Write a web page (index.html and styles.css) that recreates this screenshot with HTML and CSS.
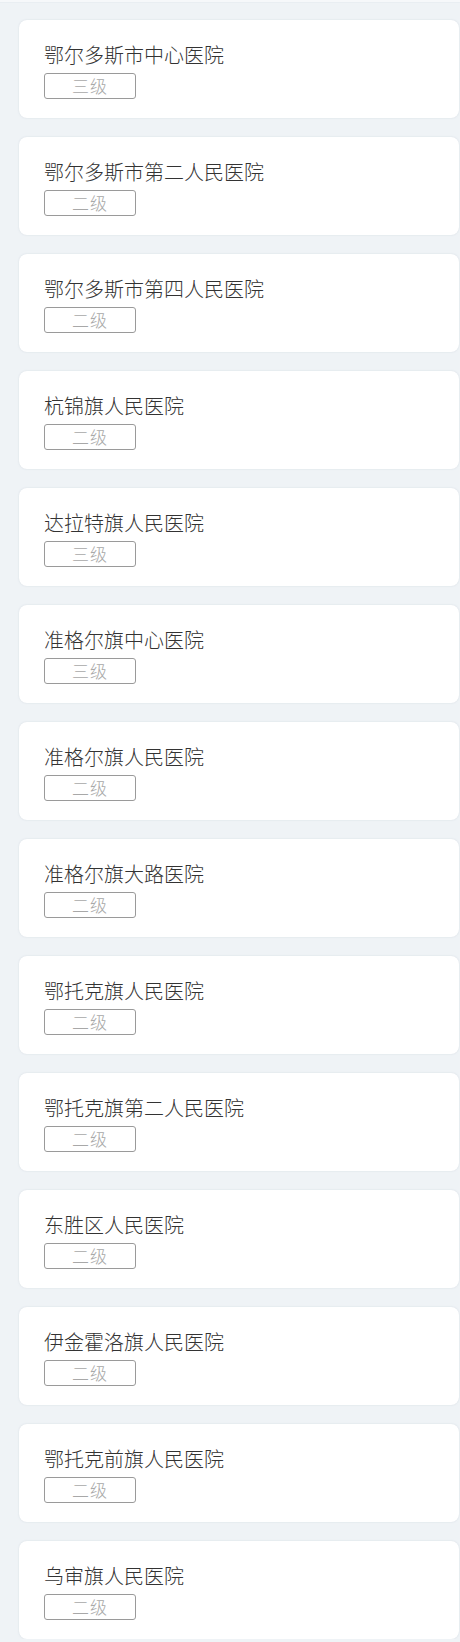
FILE: index.html
```html
<!DOCTYPE html>
<html lang="zh-CN">
<head>
<meta charset="utf-8">
<title>医院列表</title>
<link rel="stylesheet" href="styles.css">
</head>
<body>
<div class="topline"></div>
<ul class="list">
  <li class="card"><div class="name">鄂尔多斯市中心医院</div><span class="level">三级</span></li>
  <li class="card"><div class="name">鄂尔多斯市第二人民医院</div><span class="level">二级</span></li>
  <li class="card"><div class="name">鄂尔多斯市第四人民医院</div><span class="level">二级</span></li>
  <li class="card"><div class="name">杭锦旗人民医院</div><span class="level">二级</span></li>
  <li class="card"><div class="name">达拉特旗人民医院</div><span class="level">三级</span></li>
  <li class="card"><div class="name">准格尔旗中心医院</div><span class="level">三级</span></li>
  <li class="card"><div class="name">准格尔旗人民医院</div><span class="level">二级</span></li>
  <li class="card"><div class="name">准格尔旗大路医院</div><span class="level">二级</span></li>
  <li class="card"><div class="name">鄂托克旗人民医院</div><span class="level">二级</span></li>
  <li class="card"><div class="name">鄂托克旗第二人民医院</div><span class="level">二级</span></li>
  <li class="card"><div class="name">东胜区人民医院</div><span class="level">二级</span></li>
  <li class="card"><div class="name">伊金霍洛旗人民医院</div><span class="level">二级</span></li>
  <li class="card"><div class="name">鄂托克前旗人民医院</div><span class="level">二级</span></li>
  <li class="card"><div class="name">乌审旗人民医院</div><span class="level">二级</span></li>
</ul>
</body>
</html>
```

FILE: styles.css
```css
html, body {
  margin: 0;
  padding: 0;
  background: #eff3f6;
  font-family: "Noto Sans CJK SC", "Noto Sans", sans-serif;
}
.topline {
  height: 2px;
  background: #f6f8fa;
  border-bottom: 1px solid #e9eef2;
}
.list {
  list-style: none;
  margin: 0;
  padding: 17px 1px 0 19px;
  display: flex;
  flex-direction: column;
  gap: 19px;
}
.card {
  background: #ffffff;
  border-radius: 8px;
  box-shadow: 0 0 2px rgba(160, 175, 190, 0.35);
  padding: 20px 25px 19px;
  display: flex;
  flex-direction: column;
  align-items: flex-start;
}
.name {
  font-size: 20px;
  font-weight: 300;
  line-height: 30px;
  color: #333333;
}
.level {
  margin-top: 3px;
  width: 90px;
  height: 24px;
  border: 1px solid #9a9a9a;
  border-radius: 3px;
  font-size: 17px;
  font-weight: 300;
  line-height: 24px;
  color: #a8a8a8;
  text-align: center;
  letter-spacing: 1px;
}
```
